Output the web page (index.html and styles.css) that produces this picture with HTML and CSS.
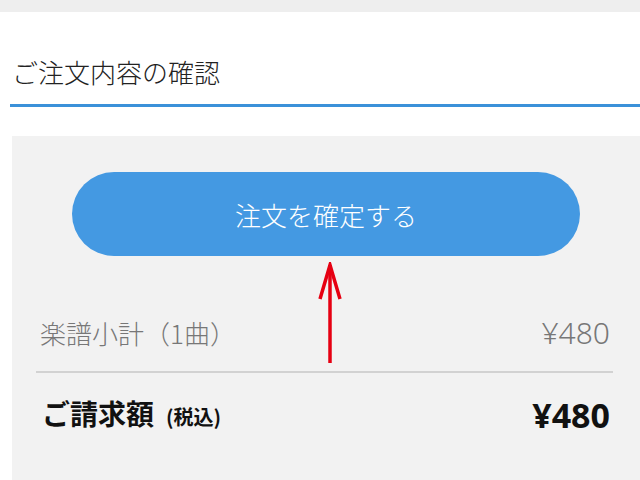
FILE: index.html
```html
<!DOCTYPE html>
<html lang="ja">
<head>
    <meta charset="UTF-8">
    <meta name="viewport" content="width=device-width, initial-scale=1.0">
    <title>ご注文内容の確認</title>
    <link rel="stylesheet" href="styles.css">
</head>
<body>
    <div class="topbar"></div>

    <header class="page-header">
        <h1>ご注文内容の確認</h1>
    </header>

    <div class="order-panel">
        <button class="confirm-button">注文を確定する</button>

        <svg class="pointer-arrow" width="30" height="104" viewBox="0 0 30 104">
            <path d="M13 3 L13 101" stroke="#e60012" stroke-width="3.5" fill="none"/>
            <path d="M3 37 L13 3 L23 37" stroke="#e60012" stroke-width="3.5" fill="none" stroke-linejoin="miter"/>
        </svg>

        <div class="summary-row subtotal">
            <span class="label">楽譜小計（1曲）</span>
            <span class="amount">¥480</span>
        </div>

        <div class="summary-row total">
            <span class="label">ご請求額<small>(税込)</small></span>
            <span class="amount">¥480</span>
        </div>
    </div>
</body>
</html>
```

FILE: styles.css
```css
body {
    font-family: "Noto Sans CJK JP", "Noto Sans", sans-serif;
    margin: 0;
    padding: 0;
    background-color: #fff;
    color: #222;
}

.topbar {
    height: 12px;
    background-color: #eeeeee;
}

.page-header {
    margin-left: 10px;
    padding: 42px 0 14px 2px;
    border-bottom: 3px solid #3b91d9;
}

.page-header h1 {
    margin: 0;
    font-size: 26px;
    font-weight: 300;
    line-height: 36px;
    color: #222;
}

.order-panel {
    position: relative;
    margin: 29px 0 0 12px;
    padding: 36px 27px 60px 24px;
    background-color: #f2f2f2;
}

.confirm-button {
    display: block;
    width: calc(100% - 69px);
    height: 84px;
    margin: 0 0 57px 36px;
    border: none;
    border-radius: 42px;
    background-color: #4499e2;
    color: #fff;
    font-family: inherit;
    font-size: 26px;
    font-weight: 300;
    cursor: pointer;
}

.pointer-arrow {
    position: absolute;
    left: 305px;
    top: 126px;
}

.summary-row {
    display: flex;
    justify-content: space-between;
    align-items: center;
    padding: 0 3px;
    line-height: 40px;
}

.subtotal {
    padding-bottom: 18px;
    border-bottom: 2px solid #d2d2d2;
    color: #777;
    font-size: 26px;
    font-weight: 300;
}

.subtotal .label {
    padding-left: 1px;
}

.subtotal .amount {
    font-family: "Noto Sans", sans-serif;
    font-size: 30px;
    font-weight: 300;
}

.total {
    padding-top: 20px;
    color: #111;
    font-weight: bold;
}

.total .label {
    font-size: 28px;
    padding-left: 3px;
}

.total .label small {
    font-size: 20px;
    margin-left: 12px;
}

.total .amount {
    font-family: "Noto Sans", sans-serif;
    font-size: 34px;
}
```
